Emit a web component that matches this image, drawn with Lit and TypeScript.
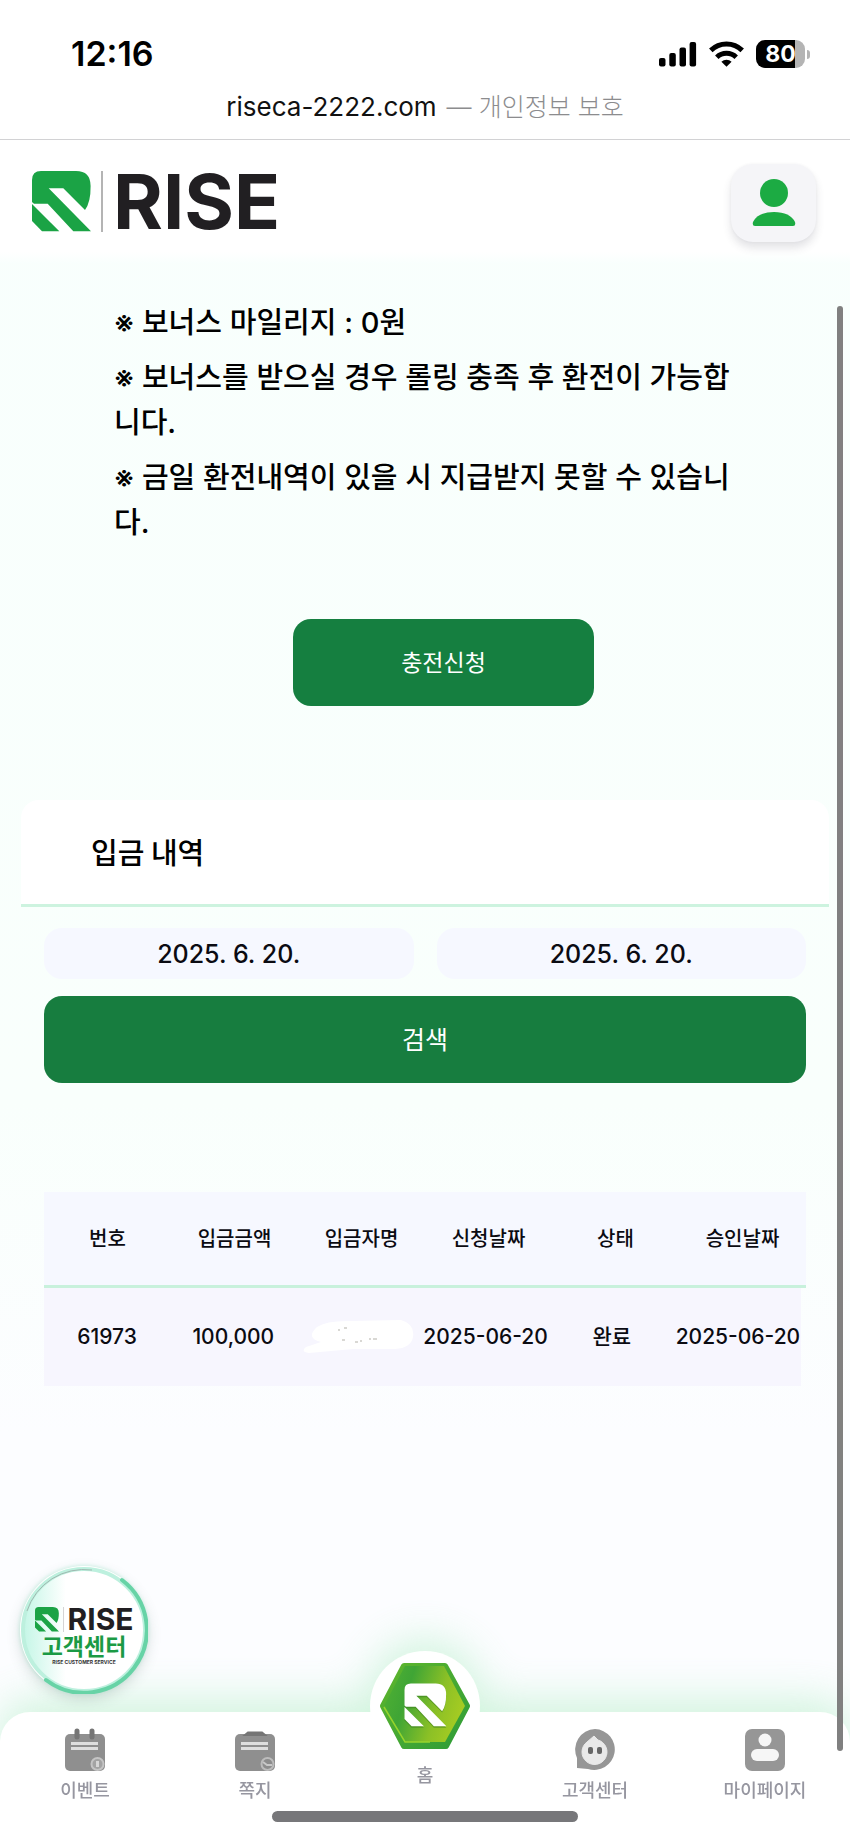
import { LitElement, html, css, svg } from "lit";
import { customElement, property } from "lit/decorators.js";

const markPath = svg`
  <path d="M0 31 V9 Q0 0 9 0 H44 Q58.6 0 58.6 15 Q58.8 31 53 39 L31.3 17.3 H16.7 L59 60.3 H41.3 L15.7 32.7 H2 Z"/>
  <path d="M0 33 L27.3 60.3 H10 L0 50 Z"/>`;

@customElement("rise-logo")
class RiseLogo extends LitElement {
  static styles = css`
    :host { display: flex; align-items: center; gap: 10px; }
    .mark { width: 59px; height: 61px; fill: #1ba345; }
    .rule { width: 2px; height: 61px; background: #b4b4b4; }
    .word { font: 700 76px/61px Inter, "Liberation Sans", sans-serif; color: #211f22; }
    :host([compact]) { gap: 4px; }
    :host([compact]) .mark { width: 24px; height: 25px; }
    :host([compact]) .rule { width: 1px; height: 25px; background: #d4d4d4; }
    :host([compact]) .word { font-size: 30px; line-height: 25px; }
  `;
  render() {
    return html`
      <svg class="mark" viewBox="0 0 59 61" aria-hidden="true">${markPath}</svg>
      <span class="rule"></span><span class="word">RISE</span>`;
  }
}

@customElement("status-bar")
class StatusBar extends LitElement {
  static styles = css`
    :host { display: block; background: #fff; border-bottom: 1px solid #d2d2d4; padding-top: 36px; }
    .row { display: flex; align-items: center; justify-content: space-between; height: 36px; padding: 0 40px 0 71px; }
    .time { font: 600 34px/36px Inter, sans-serif; }
    .icons { display: flex; align-items: center; gap: 12px; }
    .icons svg { display: block; }
    .cell { display: flex; align-items: center; gap: 2px; }
    .battery { width: 49px; height: 28px; border-radius: 9px; background: linear-gradient(90deg, #000 80%, #b4b4b4 80%);
      color: #fff; font: 700 23px/28px Inter, sans-serif; display: flex; justify-content: center; }
    .nub { width: 3px; height: 9px; border-radius: 0 4px 4px 0; background: #b4b4b4; }
    .url { display: flex; justify-content: center; gap: 10px; padding: 17px 0 14px;
      font: 400 26px/36px Inter, "Noto Sans CJK KR", sans-serif; color: #111; }
    .privacy { color: #8c8c8e; font: 300 25px/36px Inter, "Noto Sans CJK KR", sans-serif; }
  `;
  render() {
    return html`
      <div class="row">
        <span class="time">12:16</span>
        <div class="icons">
          <svg width="38" height="26" viewBox="0 0 38 26" aria-label="신호">
            <rect x="0" y="17" width="6.5" height="8.5" rx="2"/><rect x="10.3" y="12" width="6.5" height="13.5" rx="2"/>
            <rect x="20.5" y="6.5" width="6.5" height="19" rx="2"/><rect x="30.6" y="1" width="6.5" height="24.5" rx="2"/>
          </svg>
          <svg width="35" height="26" viewBox="0 0 35 26" fill="none" stroke="#000" stroke-width="5" aria-label="와이파이">
            <path d="M1.8 9.4 A22.5 22.5 0 0 1 33.2 9.4"/><path d="M7.8 16.2 A14 14 0 0 1 27.2 16.2"/>
            <path d="M17.5 25.8 L12.4 20.8 A7.5 7.5 0 0 1 22.6 20.8 Z" fill="#000" stroke="none"/>
          </svg>
          <div class="cell"><span class="battery">80</span><span class="nub"></span></div>
        </div>
      </div>
      <div class="url"><span>riseca-2222.com</span><span class="privacy">— 개인정보 보호</span></div>`;
  }
}

@customElement("bottom-nav")
class BottomNav extends LitElement {
  static styles = css`
    :host { display: block; filter: drop-shadow(0 -10px 22px rgba(150, 232, 175, .45)); }
    nav { display: grid; grid-template-columns: repeat(5, 1fr); background: #fff; border-radius: 30px 30px 0 0; height: 127px; }
    a { display: flex; flex-direction: column; align-items: center; gap: 5px; padding-top: 16px; text-decoration: none;
      font: 500 18px/26px "Noto Sans CJK KR", sans-serif; color: #9696a0; }
    .icon { width: 42px; height: 43px; }
    .home { padding: 0; margin-top: -61px; gap: 0; }
    .disc { width: 110px; height: 110px; border-radius: 50%; background: #fff; display: flex; justify-content: center; align-items: center; }
    .disc svg { width: 90px; height: 86px; }
  `;
  render() {
    return html`
      <nav>
        <a href="#event">
          <svg class="icon" viewBox="0 0 42 43">
            <rect x="1" y="6" width="40" height="37" rx="5" fill="#8f8f8f"/>
            <path d="M13 3 V9 M28 3 V9" stroke="#757575" stroke-width="5" stroke-linecap="round"/>
            <path d="M7 15.5 H34 M7 20.5 H34" stroke="#dedede" stroke-width="3"/>
            <circle cx="33.5" cy="36" r="6" fill="#a3a3a3" stroke="#c4c4c4" stroke-width="2"/>
            <path d="M33.5 33 V39" stroke="#d6d6d6" stroke-width="3"/>
          </svg>이벤트</a>
        <a href="#message">
          <svg class="icon" viewBox="0 0 42 43">
            <rect x="1" y="6" width="40" height="37" rx="5" fill="#8f8f8f"/>
            <path d="M11 7 L14 4.5 H28 L31 7 Z" fill="#757575" stroke="#757575" stroke-width="2"/>
            <path d="M7 15.5 H34 M7 20.5 H34" stroke="#dedede" stroke-width="3"/>
            <circle cx="33.5" cy="36" r="6" fill="#8d8d8d" stroke="#bcbcbc" stroke-width="2"/>
            <path d="M29 34 L33 37 L38 37" stroke="#c8c8c8" stroke-width="2" fill="none"/>
          </svg>쪽지</a>
        <a class="home" href="#home">
          <span class="disc">
            <svg viewBox="0 0 90 86">
              <defs>
                <linearGradient id="face" x1="0" y1=".2" x2="1" y2=".5">
                  <stop offset="0" stop-color="#4fb033"/><stop offset=".3" stop-color="#3fa535"/>
                  <stop offset=".7" stop-color="#8bc026"/><stop offset="1" stop-color="#a6cc22"/>
                </linearGradient>
                <linearGradient id="edge" x1="0" y1="0" x2="1" y2="1">
                  <stop offset="0" stop-color="#5fb62c"/><stop offset="1" stop-color="#2e9c38"/>
                </linearGradient>
              </defs>
              <path d="M24 3 H65 L87 43 L66 83 H24 L3 43 Z" fill="url(#edge)" stroke="url(#edge)" stroke-width="6" stroke-linejoin="round"/>
              <path d="M25 3 H64 L85 43 L65 79 H25 L4 43 Z" fill="url(#face)"/>
              <path d="M4 44 L25 79 H50" fill="none" stroke="#96d42c" stroke-width="1.5"/>
              <g transform="translate(24.5 20.5) scale(.71)"><g fill="#37791d" opacity=".5" transform="translate(0 2)">${markPath}</g><g fill="#fff">${markPath}</g></g>
            </svg>
          </span>홈</a>
        <a href="#support">
          <svg class="icon" viewBox="0 0 42 43">
            <path d="M21 1 A20.5 20.5 0 1 1 14 41 L3 40 V30 A20.5 20.5 0 0 1 21 1 Z" fill="#969696"/>
            <path d="M20 8 L24 12 A12.5 12.5 0 1 1 13 14 Z" fill="#e9e9e9" stroke="#e9e9e9" stroke-width="1"/>
            <rect x="14" y="19" width="5" height="7" rx="2" fill="#666"/><rect x="23" y="19" width="5" height="7" rx="2" fill="#666"/>
          </svg>고객센터</a>
        <a href="#mypage">
          <svg class="icon" viewBox="0 0 42 43">
            <rect x="1" y="1" width="40" height="42" rx="7" fill="#969696"/>
            <circle cx="21" cy="12" r="6.5" fill="#f6f6f6"/><rect x="7" y="21" width="28" height="12" rx="6" fill="#f6f6f6"/>
          </svg>마이페이지</a>
      </nav>`;
  }
}

@customElement("deposit-history")
class DepositHistory extends LitElement {
  @property({ attribute: false }) columns = ["번호", "입금금액", "입금자명", "신청날짜", "상태", "승인날짜"];
  @property({ attribute: false }) rows = [["61973", "100,000", null, "2025-06-20", "완료", "2025-06-20"]];
  static styles = css`
    :host { display: block; font-family: Inter, "Noto Sans CJK KR", sans-serif; color: #0b0b12; }
    .title { margin: 0 21px; padding: 29px 70px 31px; background: #fff; border-radius: 18px 18px 0 0; border-bottom: 3px solid #cdf3df;
      font: 500 29px/44px "Noto Sans CJK KR", sans-serif; color: #000; }
    .body { padding: 21px 44px 0; }
    .search { display: grid; grid-template-columns: 1fr 1fr; gap: 17px 23px; margin: 0; }
    input { min-width: 0; width: 100%; box-sizing: border-box; height: 51px; border: 0; border-radius: 18px; background: #f6f8ff;
      text-align: center; font: 500 25px/36px Inter, sans-serif; color: #0b0b12; }
    button { grid-column: 1 / -1; height: 87px; border: 0; border-radius: 18px; background: #177d3f; color: #fff;
      font: 400 25px/36px Inter, "Noto Sans CJK KR", sans-serif; }
    table { display: block; margin-top: 109px; }
    thead, tbody { display: block; }
    tr { display: grid; grid-template-columns: repeat(6, 1fr); align-items: center; }
    thead tr { height: 93px; background: #f6f8ff; border-bottom: 3px solid #c8f1dc; }
    tbody tr { height: 98px; margin-right: 5px; background: #f7f6fe; }
    th, td { padding: 0; text-align: center; white-space: nowrap; font-weight: 500; line-height: 30px; }
    th { font-size: 20px; }
    td { font-size: 21px; }
    .erased { display: block; margin: 0 auto; width: 112px; height: 34px; }
  `;
  render() {
    const erased = html`<svg class="erased" viewBox="0 0 112 34" aria-hidden="true">
      <path d="M14 7 Q24 0 50 1 L98 0 Q112 4 110 17 Q108 28 92 29 L50 29 L6 33 Q-3 32 3 27 L18 22 Q2 18 14 7 Z" fill="#fff"/>
      <path d="M35 10 h2 M41 8 h3 M39 20 h3 M52 22 h3 M57 21 h2 M66 19 h2 M70 19 h4" stroke="#b3b1a9" stroke-width="1"/></svg>`;
    return html`
      <h2 class="title">입금 내역</h2>
      <div class="body">
        <form class="search" @submit=${(e: Event) => e.preventDefault()}>
          <input aria-label="시작일" .value=${"2025. 6. 20."} />
          <input aria-label="종료일" .value=${"2025. 6. 20."} />
          <button>검색</button>
        </form>
        <table>
          <thead><tr>${this.columns.map((c) => html`<th scope="col">${c}</th>`)}</tr></thead>
          <tbody>${this.rows.map((r) => html`<tr>${r.map((v) => html`<td>${v ?? erased}</td>`)}</tr>`)}</tbody>
        </table>
      </div>`;
  }
}

@customElement("app-root")
class AppRoot extends LitElement {
  static styles = css`
    :host { position: relative; display: flex; flex-direction: column; min-height: 100vh; color: #000;
      background: linear-gradient(180deg, #f8fffd 0, #f9fffc 60%, #fcfdff 78%); font-family: Inter, "Noto Sans CJK KR", sans-serif; }
    header { display: flex; justify-content: space-between; align-items: flex-start; padding: 24px 34px 22px 32px;
      background: linear-gradient(180deg, #fff 90%, #f8fffd); }
    rise-logo.brand { margin-top: 7px; }
    .user { width: 85px; height: 78px; padding: 0; border: 0; border-radius: 22px; background: #f5f5f8;
      box-shadow: 0 6px 8px rgba(60, 60, 80, .14), 0 0 3px rgba(60, 60, 80, .05);
      display: flex; justify-content: center; align-items: center; }
    main { flex: 1; }
    .notice { padding: 36px 116px 0 114px; display: flex; flex-direction: column; gap: 10px; font: 500 29px/45px Inter, "Noto Sans CJK KR", sans-serif; }
    .notice p { margin: 0; }
    .apply-row { display: flex; justify-content: center; padding: 74px 0 94px 37px; }
    .apply { width: 301px; height: 87px; border: 0; border-radius: 18px; background: #157f40; color: #fff;
      font: 400 23px/36px Inter, "Noto Sans CJK KR", sans-serif; }
    .support { position: absolute; left: 20px; bottom: 145px; width: 128px; height: 128px; border-radius: 50%; box-sizing: border-box;
      display: flex; flex-direction: column; align-items: center; justify-content: center; gap: 1px; padding-top: 12px;
      text-decoration: none; background: #fff; isolation: isolate;
      box-shadow: 0 5px 14px rgba(60, 90, 80, .2), 0 0 4px #c8f5e4; }
    .ring { position: absolute; inset: 0; z-index: -1; }
    .support strong { font: 700 23px/25px "Noto Sans CJK KR", sans-serif; color: #1b9a45; }
    .support small { font: 700 5px/7px Inter, sans-serif; color: #333; }
    .scroll { position: absolute; right: 7px; top: 306px; bottom: 88px; width: 6px; border-radius: 3px; background: #808080; }
    .grip { position: absolute; left: 0; right: 0; bottom: 17px; margin: 0 auto; width: 36%; height: 11px; border-radius: 6px; background: #77777a; }
  `;
  render() {
    return html`
      <status-bar></status-bar>
      <header>
        <rise-logo class="brand"></rise-logo>
        <button class="user" aria-label="내 정보">
          <svg width="44" height="48" viewBox="0 0 44 48" fill="#1cab43"><circle cx="22" cy="14" r="14"/>
            <path d="M3 47 Q0 47 1 43 Q6 33 22 33 Q38 33 43 43 Q44 47 41 47 Z"/></svg>
        </button>
      </header>
      <main>
        <div class="notice">
          <p>※ 보너스 마일리지 : 0원</p>
          <p>※ 보너스를 받으실 경우 롤링 충족 후 환전이 가능합니다.</p>
          <p>※ 금일 환전내역이 있을 시 지급받지 못할 수 있습니다.</p>
        </div>
        <div class="apply-row"><button class="apply">충전신청</button></div>
        <deposit-history></deposit-history>
      </main>
      <bottom-nav></bottom-nav>
      <a class="support" href="#support">
        <svg class="ring" viewBox="0 0 128 128" fill="none" aria-hidden="true">
          <defs><linearGradient id="halo" x1="0" y1="0" x2="1" y2="0"><stop offset="0" stop-color="#c4f6e6"/><stop offset=".35" stop-color="#c4f6e6" stop-opacity="0"/></linearGradient></defs>
          <circle cx="64" cy="64" r="61" fill="url(#halo)" stroke="#bdf0de" stroke-width="4"/>
          <path d="M7 45 A60 60 0 0 1 72 4" stroke="#9fb8b0" stroke-width="1"/>
          <path d="M102 14 A62 62 0 0 1 26 114" stroke="#67d3a6" stroke-width="4" stroke-linecap="round"/>
        </svg>
        <rise-logo compact></rise-logo>
        <strong>고객센터</strong><small>RISE CUSTOMER SERVICE</small>
      </a>
      <div class="scroll"></div>
      <div class="grip"></div>`;
  }
}
